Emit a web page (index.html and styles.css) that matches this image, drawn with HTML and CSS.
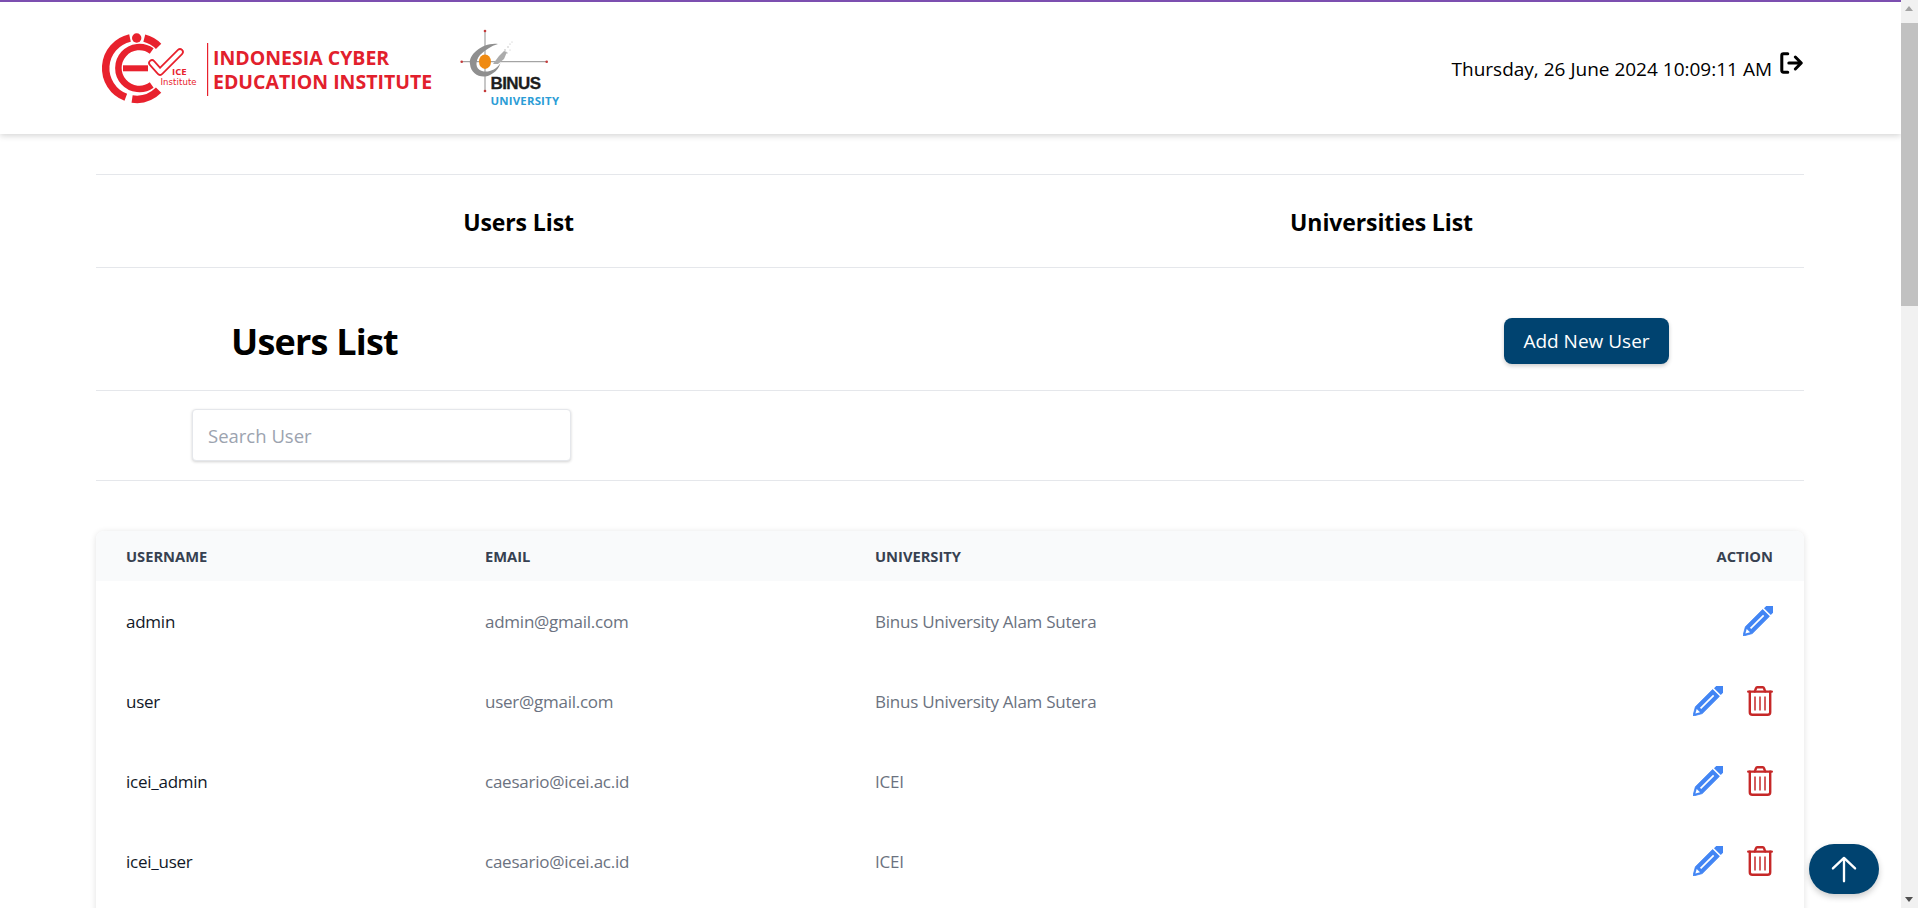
FILE: index.html
```html
<!DOCTYPE html>
<html lang="en">
<head>
<meta charset="utf-8">
<title>Users List</title>
<link rel="stylesheet" href="styles.css">
</head>
<body>
<svg class="sprite" width="0" height="0" aria-hidden="true">
  <symbol id="pencil" viewBox="0 0 30 30">
    <g transform="rotate(45 15 15)">
      <path d="M10.200 -3.500a4.800 3.500 0 0 1 9.600 0v5.200h-9.600z" fill="#4285f4"/>
      <path d="M10.200 3.600h9.600v24.400l-4.800 8.400-4.800-8.400z" fill="#4285f4" stroke="#4285f4" stroke-width=".8" stroke-linejoin="round"/>
      <path d="M15 7v18.500" stroke="#fff" stroke-width="1.700"/>
      <path d="M12.600 28.600h4.800l-2.400 4.200z" fill="#fff"/>
    </g>
  </symbol>
  <symbol id="trash" viewBox="0 0 26 30">
    <g fill="none" stroke="#c62828" stroke-width="2.400" stroke-linecap="round" stroke-linejoin="round">
      <path d="M1.200 5.600h23.600"/>
      <path d="M7.800 5.400l1.300-3.400a1.200 1.200 0 0 1 1.100-.8h5.600a1.200 1.200 0 0 1 1.100.8l1.300 3.400"/>
      <path d="M2.800 5.800v20.400a2.600 2.600 0 0 0 2.600 2.600h15.200a2.600 2.600 0 0 0 2.600-2.600V5.800"/>
    </g>
    <path d="M8 10.500v14M13 10.500v14M18 10.500v14" stroke="#c62828" stroke-width="1.500" fill="none"/>
  </symbol>
</svg>
<div class="viewport">
  <main class="page">
    <header class="topbar">
      <div class="logos">
        <svg class="logo-ice" viewBox="0 0 336 76" width="336" height="76" role="img" aria-label="Indonesia Cyber Education Institute">
          <g fill="none" stroke="#e8212d">
            <path d="M30 8A31 31 0 0 0 25.800 67.300" stroke-width="7.500"/>
            <path d="M32.100 69A31 31 0 0 0 58.600 60.200" stroke-width="7.500"/>
            <path d="M44.300 8.200A31 31 0 0 1 58.600 16.400" stroke-width="7.500"/>
            <path d="M51.700 21A21 21 0 1 0 51.700 55" stroke-width="6.500"/>
            <path d="M23 38.300H48" stroke-width="6"/>
          </g>
          <path d="M52 33L60 42L80 22" fill="none" stroke="#e8212d" stroke-width="7.500" stroke-linecap="round" stroke-linejoin="round"/>
          <path d="M52 33L60 42L80 22" fill="none" stroke="#fff" stroke-width="4" stroke-linecap="round" stroke-linejoin="round"/>
          <circle cx="36.700" cy="8" r="4.700" fill="#e8212d"/>
          <text class="ice-mark" x="72" y="45">ICE</text>
          <text class="ice-sub" x="60.500" y="55">Institute</text>
          <rect x="107" y="13" width="1.200" height="53" fill="#e8212d"/>
          <text class="ice-name" x="113" y="35">INDONESIA CYBER</text>
          <text class="ice-name" x="113" y="58.500">EDUCATION INSTITUTE</text>
        </svg>
        <svg class="logo-binus" viewBox="0 0 102 84" width="102" height="84" role="img" aria-label="Binus University">
          <path d="M27 5v60M3.700 35.700h85" stroke="#8f8f8f" stroke-width="1"/>
          <g fill="#c43a3a"><circle cx="27" cy="5" r="1.300"/><circle cx="27" cy="65" r="1.300"/><circle cx="3.700" cy="35.700" r="1.300"/><circle cx="88.700" cy="35.700" r="1.300"/></g>
          <path d="M40 18C26 16 10 28 12 38C13 49 24 53 32 49C38 46 41 42 42.500 37C38 44 30 47 24 45C17 43 17 35 22 29C27 24 33 20 40 18Z" fill="#8f8f8f"/>
          <ellipse cx="27" cy="35.700" rx="6" ry="7.200" fill="#ef8a12"/>
          <path d="M35 38l6-8 5-5 3 1-3 7-6 5z" fill="#ababab"/>
          <g fill="#b4b4b4"><circle cx="47" cy="24" r=".8"/><circle cx="50" cy="21" r=".7"/><circle cx="49" cy="27" r=".7"/><circle cx="52" cy="18" r=".6"/><circle cx="54" cy="16" r=".5"/><circle cx="52" cy="24" r=".5"/></g>
          <text class="binus-name" x="32.500" y="62.500">BINUS</text>
          <text class="binus-sub" x="32.500" y="79">UNIVERSITY</text>
        </svg>
      </div>
      <div class="clock">
        <span>Thursday, 26 June 2024 10:09:11 AM</span>
        <svg class="logout" viewBox="0 0 24 24" width="26" height="26" aria-hidden="true"><path d="M9 3.500H5a1.500 1.500 0 0 0-1.500 1.500v14A1.500 1.500 0 0 0 5 20.500h4M10 12h11M16 6.500l5.500 5.500-5.500 5.500" fill="none" stroke="#000" stroke-width="2.800" stroke-linecap="round" stroke-linejoin="round"/></svg>
      </div>
    </header>
    <div class="content">
      <nav class="tabs">
        <a class="tab">Users List</a>
        <a class="tab">Universities List</a>
      </nav>
      <section class="title-row">
        <h1>Users List</h1>
        <button class="primary" type="button">Add New User</button>
      </section>
      <section class="search-row">
        <input class="search" type="text" placeholder="Search User">
      </section>
      <div class="table-card">
        <table>
          <colgroup><col class="col-user"><col class="col-email"><col class="col-uni"><col></colgroup>
          <thead>
            <tr><th>Username</th><th>Email</th><th>University</th><th class="right">Action</th></tr>
          </thead>
          <tbody>
            <tr>
              <td class="name">admin</td><td>admin@gmail.com</td><td>Binus University Alam Sutera</td>
              <td><div class="actions"><svg class="ico-pencil"><use href="#pencil"/></svg></div></td>
            </tr>
            <tr>
              <td class="name">user</td><td>user@gmail.com</td><td>Binus University Alam Sutera</td>
              <td><div class="actions"><svg class="ico-pencil"><use href="#pencil"/></svg><svg class="ico-trash"><use href="#trash"/></svg></div></td>
            </tr>
            <tr>
              <td class="name">icei_admin</td><td>caesario@icei.ac.id</td><td>ICEI</td>
              <td><div class="actions"><svg class="ico-pencil"><use href="#pencil"/></svg><svg class="ico-trash"><use href="#trash"/></svg></div></td>
            </tr>
            <tr>
              <td class="name">icei_user</td><td>caesario@icei.ac.id</td><td>ICEI</td>
              <td><div class="actions"><svg class="ico-pencil"><use href="#pencil"/></svg><svg class="ico-trash"><use href="#trash"/></svg></div></td>
            </tr>
          </tbody>
        </table>
      </div>
    </div>
    <button class="to-top" type="button" aria-label="Back to top">
      <svg viewBox="0 0 24 24" width="28" height="28"><path d="M12 22.500V2.500M2.500 11.500L12 2.500l9.500 9" fill="none" stroke="#fff" stroke-width="2" stroke-linecap="round" stroke-linejoin="round"/></svg>
    </button>
  </main>
  <aside class="scrollbar" aria-hidden="true">
    <div class="arrow-up"></div>
    <div class="thumb"></div>
    <div class="track"></div>
    <div class="arrow-down"></div>
  </aside>
</div>
</body>
</html>
```

FILE: styles.css
```css
* { box-sizing: border-box; }
html, body { margin: 0; height: 100%; overflow: hidden; background: #fff; }
body { font-family: "Open Sans", "Noto Sans", "Liberation Sans", sans-serif; color: #000; }
.sprite { position: absolute; }
.viewport { display: flex; height: 908px; position: relative; }
.page { width: 1901px; flex: none; height: 908px; overflow: hidden; }
.topbar {
  height: 134px; border-top: 2px solid #7c4fb0; background: #fff;
  box-shadow: 0 2px 6px rgba(0,0,0,.16);
  display: flex; justify-content: space-between; align-items: center;
  padding: 0 97px 0 96px; position: relative;
}
.logos { display: flex; align-items: center; gap: 22px; padding-left: 4px; }
.ice-mark { font: 700 9.500px "Open Sans", sans-serif; fill: #e8212d; }
.ice-sub { font: 400 8.500px "DejaVu Sans", sans-serif; fill: #e8212d; letter-spacing: .1px; }
.ice-name { font: 700 19.500px "Open Sans", sans-serif; fill: #e2202c; }
.binus-name { font: 700 17px "Liberation Sans", sans-serif; fill: #1d1d1d; letter-spacing: -.6px; stroke: #1d1d1d; stroke-width: .3px; }
.binus-sub { font: 700 11.400px "Open Sans", sans-serif; fill: #2c9dd6; letter-spacing: .2px; }
.clock { display: flex; align-items: flex-start; gap: 6px; font-size: 19px; padding-bottom: 5px; }
.clock span { line-height: 24px; margin-top: 7px; }
.logout { display: block; }
.content { padding: 40px 97px 0 96px; }
.tabs {
  display: grid; grid-template-columns: 1fr 1fr; gap: 18px; height: 94px; padding-top: 2px;
  border-top: 1px solid #e5e7eb; border-bottom: 1px solid #e5e7eb;
  align-items: center; text-align: center;
}
.tab { font-size: 23px; font-weight: 700; letter-spacing: -.1px; }
.title-row {
  height: 123px; border-bottom: 1px solid #e5e7eb;
  display: flex; justify-content: space-between; align-items: center; padding: 23px 135px 0;
}
h1 { margin: 0; font-size: 36px; font-weight: 700; letter-spacing: -.8px; position: relative; top: 1px; }
.primary {
  height: 46px; width: 165px; border: 0; border-radius: 8px; background: #004370; color: #fff;
  font: 400 19px "Open Sans", sans-serif;
  box-shadow: 0 2px 4px rgba(0,0,0,.2);
}
.search-row { height: 90px; border-bottom: 1px solid #e5e7eb; padding: 18px 0 0 96px; }
.search {
  display: block; width: 379px; height: 52px; border: 1px solid #e5e7eb; border-radius: 4px;
  padding: 0 15px; font: 400 18.500px "Open Sans", sans-serif;
  box-shadow: 0 1px 3px rgba(0,0,0,.18); outline: 0;
}
.search::placeholder { color: #9ca3af; opacity: 1; }
.table-card {
  margin-top: 50px; border-radius: 8px; background: #fff; min-height: 500px;
  box-shadow: 0 1px 6px rgba(0,0,0,.12); overflow: hidden;
}
table { width: 100%; border-collapse: collapse; table-layout: fixed; }
.col-user { width: 359px; }
.col-email { width: 390px; }
.col-uni { width: 500px; }
th {
  height: 50px; background: #f9fafb; color: #374151; padding: 0 31px 0 30px; text-align: left;
  font-size: 14.700px; font-weight: 700; text-transform: uppercase;
}
th.right { text-align: right; }
td { height: 80px; padding: 0 31px 0 30px; font-size: 17px; color: #6b7280; letter-spacing: -.25px; }
td.name { color: #111827; }
.actions { display: flex; justify-content: flex-end; align-items: center; gap: 24px; }
.ico-pencil { width: 30px; height: 30px; display: block; overflow: visible; }
.ico-trash { width: 26px; height: 30px; display: block; }
.to-top {
  position: absolute; left: 1809px; top: 844px; width: 70px; height: 50px;
  border: 0; border-radius: 25px; background: #004370; padding: 0;
  display: flex; align-items: center; justify-content: center;
  box-shadow: 0 3px 6px rgba(0,0,0,.2);
}
.scrollbar { width: 17px; flex: none; background: #f1f1f1; display: flex; flex-direction: column; height: 908px; }
.arrow-up, .arrow-down { height: 17px; flex: none; position: relative; }
.arrow-up::after, .arrow-down::after {
  content: ""; position: absolute; left: 4px; width: 0; height: 0;
  border-left: 4.500px solid transparent; border-right: 4.500px solid transparent;
}
.arrow-up::after { top: 6px; border-bottom: 5px solid #a3a3a3; }
.arrow-down::after { top: 6px; border-top: 5px solid #505050; }
.thumb { height: 283px; flex: none; background: #c1c1c1; margin-top: 6px; }
.track { flex: 1; }
```
